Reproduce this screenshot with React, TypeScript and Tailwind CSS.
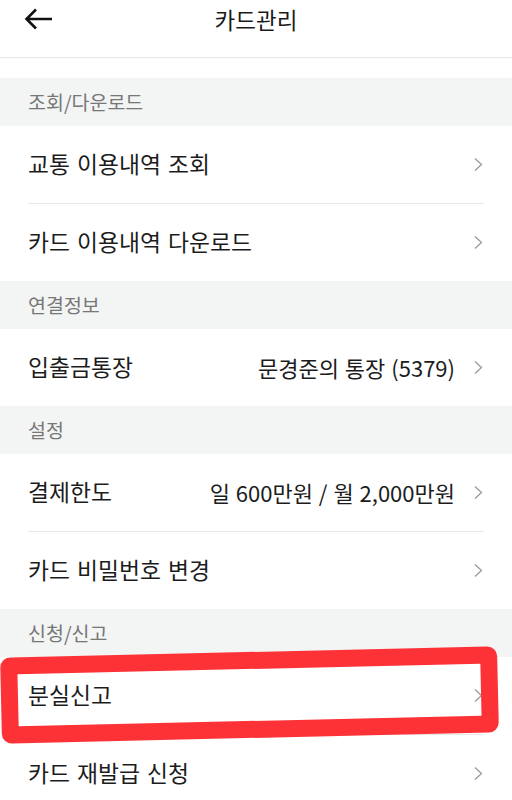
import React from "react";

const font = { fontFamily: '"Noto Sans CJK KR", "Noto Sans", sans-serif' };

function Chevron() {
  return (
    <svg width="11" height="15" viewBox="0 0 11 15" className="shrink-0">
      <path d="M2 1.5 L8.5 7.5 L2 13.5" fill="none" stroke="#9a9a9a" strokeWidth="1.3" />
    </svg>
  );
}

function SectionHeader({ title }: { title: string }) {
  return (
    <div className="h-[48px] bg-[#f3f4f4] flex items-center pl-[28px] text-[19.5px] text-[#777777]">
      {title}
    </div>
  );
}

function Row({ label, value, divider }: { label: string; value?: string; divider?: boolean }) {
  return (
    <div className="bg-white">
      <div className="h-[77px] flex items-center pl-[28px] pr-[28px]">
        <div className="flex-1 text-[22.8px] text-[#1c1c1c] [word-spacing:2px]">{label}</div>
        {value && <div className="text-[22px] text-[#1c1c1c] mr-[18px] [word-spacing:1px]">{value}</div>}
        <Chevron />
      </div>
      {divider && <div className="h-px bg-[#e8e8e8] ml-[28px] mr-[28px]" />}
    </div>
  );
}

export default function App() {
  return (
    <div className="w-[512px] h-[800px] overflow-hidden bg-white relative" style={font}>
      <div className="h-[58px] flex items-center justify-center relative border-b border-[#e6e6e6]">
        <svg width="32" height="28" viewBox="0 0 32 28" className="absolute left-[23px] top-[5px]">
          <path d="M29 14 H4 M13 4.5 L3.5 14 L13 23.5" fill="none" stroke="#111" strokeWidth="2.6" />
        </svg>
        <div className="text-[22.5px] text-[#1a1a1a] -mt-[17px]">카드관리</div>
      </div>
      <div className="h-[20px]" />
      <SectionHeader title="조회/다운로드" />
      <Row label="교통 이용내역 조회" divider />
      <Row label="카드 이용내역 다운로드" />
      <SectionHeader title="연결정보" />
      <Row label="입출금통장" value="문경준의 통장 (5379)" />
      <SectionHeader title="설정" />
      <Row label="결제한도" value="일 600만원 / 월 2,000만원" divider />
      <Row label="카드 비밀번호 변경" />
      <SectionHeader title="신청/신고" />
      <Row label="분실신고" divider />
      <Row label="카드 재발급 신청" />
      <div className="absolute left-[1px] top-[652px] w-[497px] h-[86px] border-[17px] border-[#fd3237] rounded-[10px] rotate-[-1.3deg]" />
    </div>
  );
}
